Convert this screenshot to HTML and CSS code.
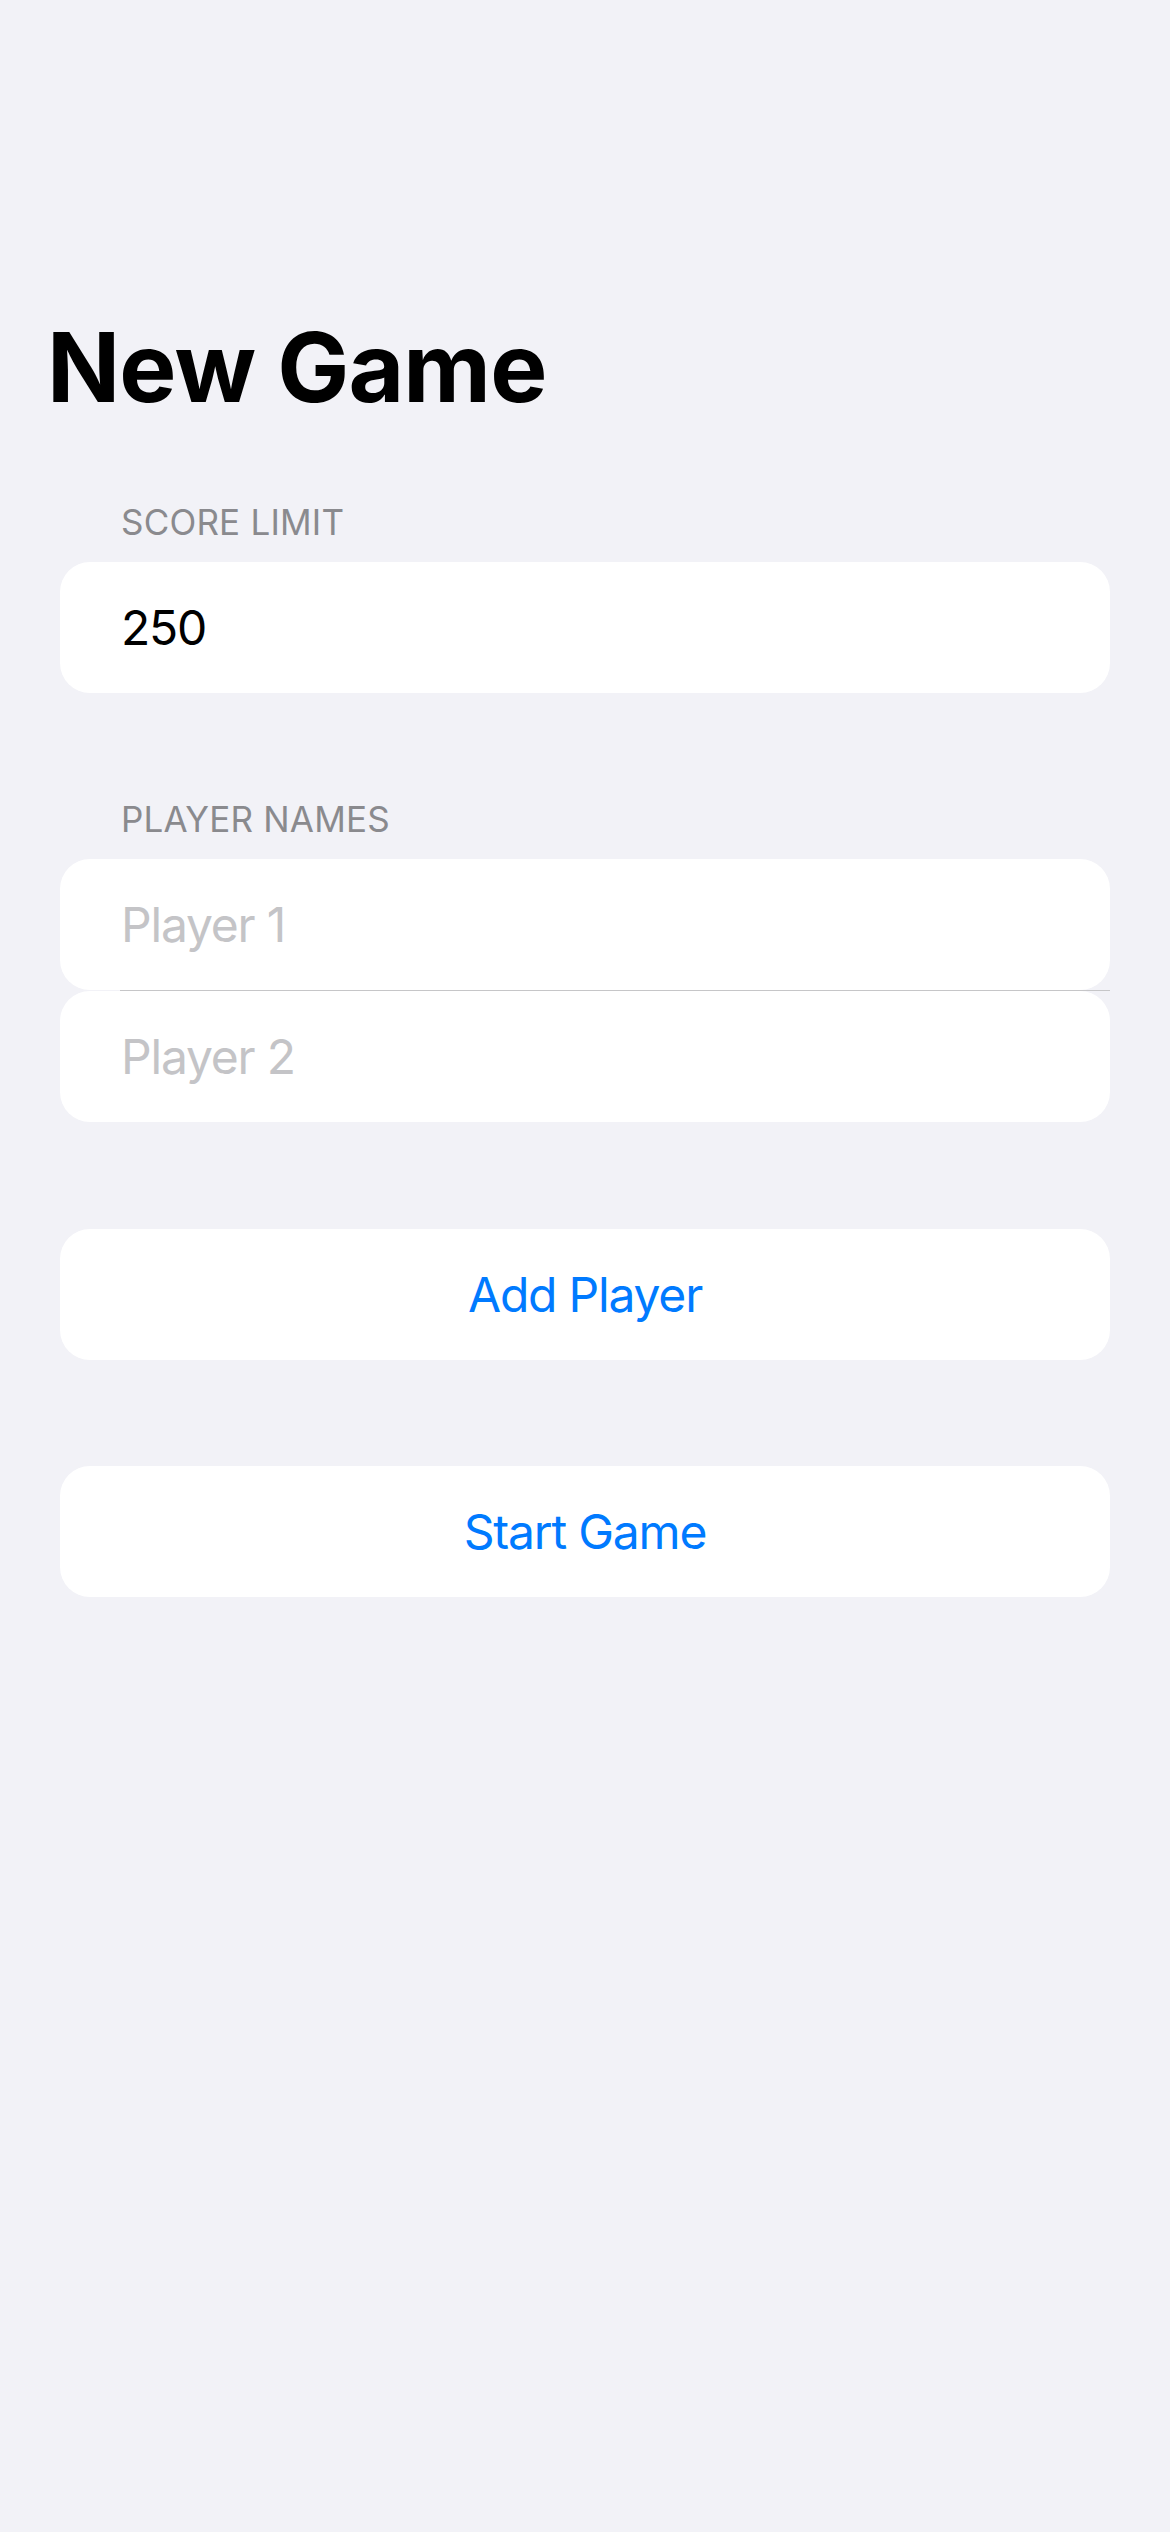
FILE: index.html
```html
<!DOCTYPE html>
<html lang="en">
<head>
<meta charset="utf-8">
<title>New Game</title>
<link rel="stylesheet" href="styles.css">
</head>
<body>
<main class="screen">
  <h1 class="title">New Game</h1>

  <section class="section section-score">
    <div class="section-header">SCORE LIMIT</div>
    <div class="card"><span class="value">250</span></div>
  </section>

  <section class="section section-players">
    <div class="section-header">PLAYER NAMES</div>
    <div class="card"><span class="placeholder">Player 1</span></div>
    <div class="separator"></div>
    <div class="card"><span class="placeholder">Player 2</span></div>
  </section>

  <section class="section section-add">
    <div class="card button">Add Player</div>
  </section>

  <section class="section section-start">
    <div class="card button">Start Game</div>
  </section>
</main>
</body>
</html>
```

FILE: styles.css
```css
html, body {
  margin: 0;
  padding: 0;
}

body {
  background: #f2f2f7;
  font-family: Inter, "Noto Sans", "Liberation Sans", sans-serif;
  width: 1170px;
  min-height: 2532px;
}

.screen {
  display: flex;
  flex-direction: column;
  padding: 309px 60px 0 60px;
}

.title {
  margin: 0 0 0 -13px;
  font-size: 96px;
  line-height: 116px;
  font-weight: 700;
  letter-spacing: -0.8px;
  color: #000;
}

.section {
  display: flex;
  flex-direction: column;
}

.section-score {
  margin-top: 76px;
}

.section-players {
  margin-top: 105px;
}

.section-add {
  margin-top: 107px;
}

.section-start {
  margin-top: 106px;
}

.section-header {
  padding-left: 61px;
  font-size: 35px;
  line-height: 42px;
  letter-spacing: 0.2px;
  color: #8a8a8e;
  margin-bottom: 19px;
}

.card {
  background: #fff;
  border-radius: 30px;
  height: 131px;
  line-height: 131px;
  padding: 0 61px;
  font-size: 48px;
  letter-spacing: -1.2px;
  color: #000;
}

.placeholder {
  color: #c4c4c7;
}

.separator {
  height: 1px;
  margin-left: 60px;
  background: #c6c6c8;
}

.button {
  text-align: center;
  color: #007aff;
}
```
